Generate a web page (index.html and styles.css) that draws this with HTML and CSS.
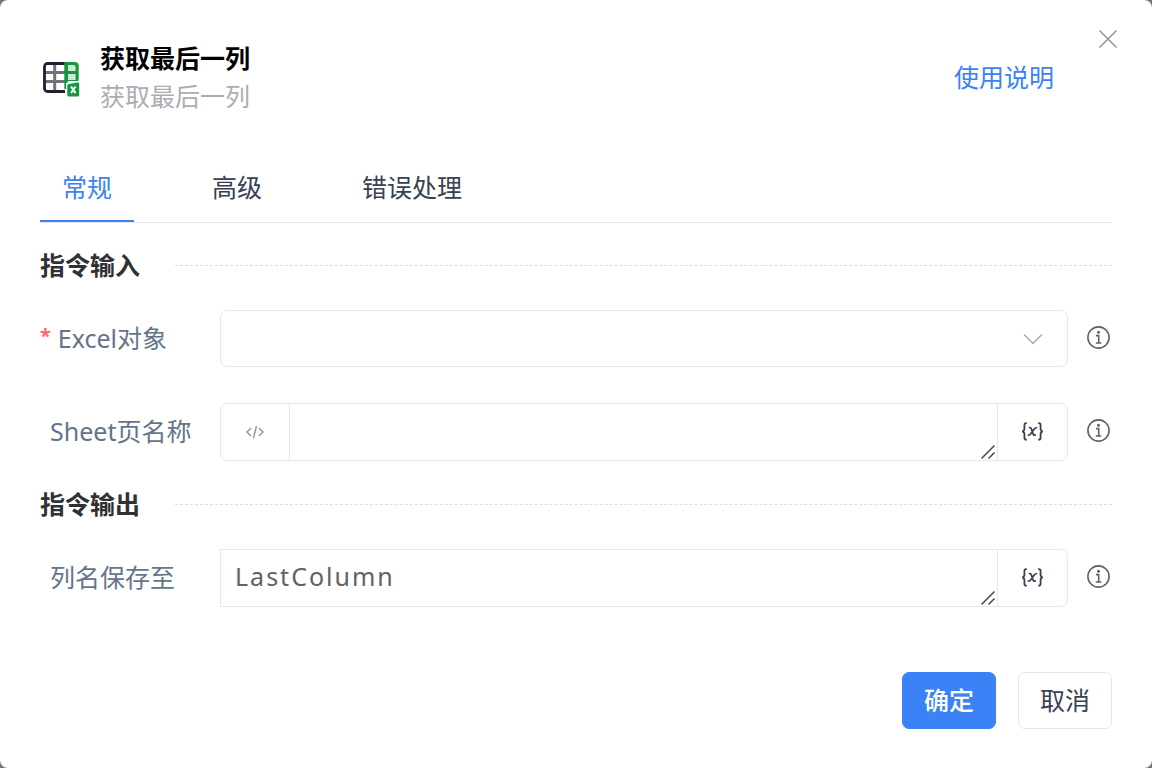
FILE: index.html
```html
<!DOCTYPE html>
<html lang="zh-CN">
<head>
<meta charset="utf-8">
<meta name="viewport" content="width=device-width, initial-scale=1">
<title>获取最后一列</title>
<link rel="stylesheet" href="styles.css">
</head>
<body>
<svg class="sprite" aria-hidden="true">
  <symbol id="info" viewBox="0 0 24 24">
    <circle cx="11.5" cy="11.5" r="10.6" fill="none" stroke="currentColor" stroke-width="1.6"/>
    <circle cx="11.5" cy="6.300" r="1.5" fill="currentColor"/>
    <path d="M9 9.600h2.700v7M8.800 17h5.600" fill="none" stroke="currentColor" stroke-width="1.6"/>
  </symbol>
  <symbol id="variable" viewBox="0 0 24 20">
    <path d="M6 1.200H5.200C3.800 1.200 3.500 2 3.500 3.200v3.600c0 1.700-.7 2.800-2.300 3.100 1.600.3 2.300 1.400 2.300 3.100v3.600c0 1.200.3 2 1.700 2H6M18 1.200h.8c1.400 0 1.700.8 1.700 2v3.600c0 1.700.7 2.800 2.300 3.100-1.600.3-2.300 1.400-2.300 3.100v3.600c0 1.200-.3 2-1.700 2H18" fill="none" stroke="currentColor" stroke-width="1.900"/>
    <path d="M8 5.800h1.200c.8 0 1.200.4 1.500 1.200l2 5.800c.3.800.7 1.100 1.400 1.100h1.500M17 5.800c-1.500 0-2.400.6-3.200 1.600l-3.600 4.900c-.8 1-1.600 1.600-3.200 1.600" fill="none" stroke="currentColor" stroke-width="1.800"/>
  </symbol>
  <symbol id="grip" viewBox="0 0 16 16">
    <path d="M1.500 14.500l13-13M8.500 14.500l6-6" fill="none" stroke="currentColor" stroke-width="1.6"/>
  </symbol>
</svg>
<main class="dialog" role="dialog" aria-labelledby="dialog-title">
  <button class="close" type="button" aria-label="关闭">
    <svg viewBox="0 0 20 20"><path d="M1.500 1.500l17 17M18.500 1.500l-17 17" fill="none" stroke="currentColor" stroke-width="1.5"/></svg>
  </button>
  <header class="header">
    <svg class="logo" viewBox="0 0 40 40" aria-hidden="true">
      <path d="M5 15.500h21M5 24.500h21M14.700 7v27" fill="none" stroke="#74717b" stroke-width="3"/>
      <path d="M25 6.500H7.500a3 3 0 0 0-3 3v22a3 3 0 0 0 3 3H25" fill="none" stroke="#231f30" stroke-width="2.800"/>
      <path d="M24.300 5h10.400a4 4 0 0 1 4 4v15h-11v8h-3.400z" fill="#16963e"/>
      <path d="M28 8h5.600a2 2 0 0 1 2 2v4H28zM28 17h7.600v6H28z" fill="#cde8d6"/>
      <path d="M26 26l14-2.500V40H27.500a1.500 1.500 0 0 1-1.500-1.500z" fill="#fff"/>
      <path d="M28.700 27l8.700-1.600a1.500 1.500 0 0 1 1.800 1.500V38a1.500 1.500 0 0 1-1.500 1.500h-8.900a1.500 1.500 0 0 1-1.500-1.500v-9.500a1.500 1.500 0 0 1 1.400-1.500z" fill="#12973d"/>
      <path d="M31 29.500l4.600 6.600M35.600 29.500L31 36.100" fill="none" stroke="#fff" stroke-width="2"/>
    </svg>
    <div class="heading">
      <h1 id="dialog-title" class="title">获取最后一列</h1>
      <p class="subtitle">获取最后一列</p>
    </div>
    <a class="help" href="#">使用说明</a>
  </header>

  <div class="tabs" role="tablist">
    <button class="tab tab-active" type="button" role="tab" aria-selected="true">常规</button>
    <button class="tab" type="button" role="tab" aria-selected="false">高级</button>
    <button class="tab" type="button" role="tab" aria-selected="false">错误处理</button>
  </div>

  <form class="form">
    <section class="section">
      <h2 class="section-title">指令输入</h2>
      <div class="field">
        <label class="label label-required" for="excel"><span class="star">*</span>Excel对象</label>
        <div class="control">
          <select id="excel" class="select" required><option value=""></option></select>
          <svg class="chevron" viewBox="0 0 20 12"><path d="M1 1.500l9 9 9-9" fill="none" stroke="currentColor" stroke-width="1.5"/></svg>
        </div>
        <button class="info" type="button" aria-label="Excel对象说明"><svg><use href="#info"/></svg></button>
      </div>
      <div class="field">
        <label class="label" for="sheet">Sheet页名称</label>
        <div class="control group">
          <button class="addon addon-left" type="button" aria-label="代码模式">
            <svg class="code" viewBox="0 0 20 14"><path d="M6 3L2 7l4 4M14 3l4 4-4 4M11.500 1l-3 12" fill="none" stroke="currentColor" stroke-width="1.4"/></svg>
          </button>
          <div class="area"><textarea id="sheet" class="textarea" rows="1"></textarea><svg class="grip"><use href="#grip"/></svg></div>
          <button class="addon addon-right" type="button" aria-label="选择变量"><svg class="variable"><use href="#variable"/></svg></button>
        </div>
        <button class="info" type="button" aria-label="Sheet页名称说明"><svg><use href="#info"/></svg></button>
      </div>
    </section>

    <section class="section">
      <h2 class="section-title">指令输出</h2>
      <div class="field">
        <label class="label" for="output">列名保存至</label>
        <div class="control group group-square">
          <div class="area"><textarea id="output" class="textarea" rows="1" spellcheck="false">LastColumn</textarea><svg class="grip"><use href="#grip"/></svg></div>
          <button class="addon addon-right" type="button" aria-label="选择变量"><svg class="variable"><use href="#variable"/></svg></button>
        </div>
        <button class="info" type="button" aria-label="列名保存至说明"><svg><use href="#info"/></svg></button>
      </div>
    </section>

    <footer class="footer">
      <button class="button button-primary" type="submit">确定</button>
      <button class="button" type="button">取消</button>
    </footer>
  </form>
</main>
</body>
</html>
```
FILE: styles.css
```css
* {
  box-sizing: border-box;
}

body {
  margin: 0;
  background: #747474;
  color: #374151;
  font-family: "Noto Sans", "Noto Sans CJK SC", sans-serif;
  font-size: 25px;
  line-height: 38px;
}

button,
select,
textarea {
  margin: 0;
  padding: 0;
  border: 0;
  background: none;
  color: inherit;
  font: inherit;
}

button {
  cursor: pointer;
}

svg {
  display: block;
}

.sprite {
  display: none;
}

.dialog {
  position: relative;
  min-height: 100vh;
  padding: 39px 40px;
  border-radius: 8px;
  background: #fff;
}

.close {
  position: absolute;
  top: 29px;
  right: 34px;
  color: #909399;
}

.close svg {
  width: 20px;
  height: 20px;
}

.header {
  display: flex;
  align-items: center;
  padding-right: 58px;
}

.logo {
  width: 40px;
  height: 40px;
}

.heading {
  flex: 1;
  margin-left: 20px;
}

.title,
.subtitle,
.section-title {
  margin: 0;
  font-size: 25px;
}

.title {
  color: #000;
  font-weight: 700;
}

.subtitle {
  color: #aeacb3;
}

.help {
  color: #3b82f6;
  text-decoration: none;
}

.tabs {
  display: flex;
  gap: 56px;
  margin-top: 38px;
  border-bottom: 1px solid #e5e7eb;
}

.tab {
  padding: 15px 22px 14px;
  border-bottom: 2px solid transparent;
}

.tab-active {
  border-bottom-color: #3b82f6;
  color: #3b82f6;
}

.section {
  padding-top: 23px;
}

.section + .section {
  padding-top: 24px;
}

.section-title {
  display: flex;
  align-items: center;
  gap: 35px;
  margin-bottom: 26px;
  color: #303133;
  font-weight: 700;
}

.section-title::after {
  flex: 1;
  border-top: 1px dashed #dcdfe6;
  content: "";
}

.field {
  display: flex;
  align-items: center;
}

.field + .field {
  margin-top: 36px;
}

.label {
  flex: 0 0 180px;
  padding-bottom: 2px;
  padding-left: 10px;
  color: #64748b;
}

.label-required {
  display: flex;
  gap: 7px;
  padding-left: 0;
}

.star {
  color: #f56c6c;
  font-size: 20px;
  font-weight: 700;
  line-height: 34px;
}

.control {
  position: relative;
  flex: 1;
  min-width: 0;
}

.select {
  display: block;
  width: 100%;
  height: 57px;
  padding: 0 60px 0 14px;
  border: 1px solid #e5e7eb;
  border-radius: 7px;
  appearance: none;
}

.chevron {
  position: absolute;
  top: 23px;
  right: 25px;
  width: 20px;
  height: 12px;
  color: #a8abb2;
  pointer-events: none;
}

.group {
  display: flex;
  border: 1px solid #e5e7eb;
  border-radius: 7px;
}

.group-square {
  border-radius: 0 7px 7px 0;
}

.area {
  position: relative;
  flex: 1;
}

.textarea {
  display: block;
  width: 100%;
  height: 56px;
  padding: 7px 14px;
  color: #606266;
  letter-spacing: 2px;
  resize: none;
  overflow: hidden;
}

.grip {
  position: absolute;
  right: 1px;
  bottom: 0;
  width: 16px;
  height: 16px;
  color: #505050;
  pointer-events: none;
}

.addon {
  display: flex;
  flex: 0 0 70px;
  align-items: center;
  justify-content: center;
  padding: 0 1px 1px 0;
}

.addon-left {
  flex-basis: 69px;
  border-right: 1px solid #e5e7eb;
  color: #909399;
}

.addon-right {
  border-left: 1px solid #e5e7eb;
}

.code {
  width: 20px;
  height: 14px;
}

.variable {
  width: 23px;
  height: 19px;
}

.info {
  margin-left: 19px;
  padding: 0 1px 2px 0;
  color: #606266;
}

.info svg {
  width: 24px;
  height: 24px;
}

.footer {
  display: flex;
  justify-content: flex-end;
  gap: 22px;
  padding-top: 65px;
}

.button {
  height: 57px;
  padding: 0 21px 2px;
  border: 1px solid #e5e7eb;
  border-radius: 7px;
}

.button-primary {
  border-color: #3b82f6;
  background: #3b82f6;
  color: #fff;
  font-weight: 500;
}
```
